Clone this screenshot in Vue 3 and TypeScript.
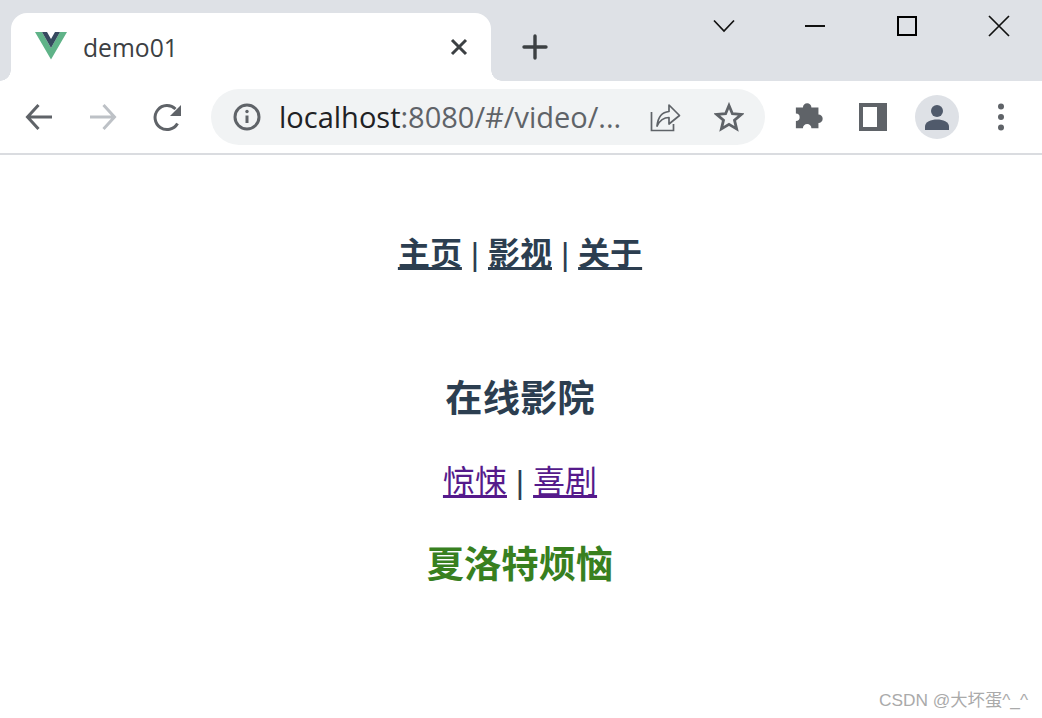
<template>
  <div class="window">
    <div class="tabstrip">
      <div class="tab">
        <svg class="favicon" width="32" height="28" viewBox="0 0 32 28">
          <polygon fill="#5fb388" points="0,0 7,0 16,16 25,0 32,0 16,27.5" />
          <polygon fill="#35495e" points="7,0 12,0 16,7 20,0 25,0 16,16" />
        </svg>
        <span class="tab__title">{{ title }}</span>
        <svg class="tab__close" width="20" height="20" viewBox="0 0 20 20">
          <path d="M3 3 17 17M17 3 3 17" stroke="#3c4043" stroke-width="3" fill="none" />
        </svg>
      </div>
      <svg class="newtab" width="26" height="26" viewBox="0 0 26 26">
        <path d="M13 2v22M2 13h22" stroke="#3c4043" stroke-width="3.4" stroke-linecap="round" fill="none" />
      </svg>
      <div class="winctrl">
        <span class="winctrl__btn winctrl__btn--menu">
          <svg width="22" height="14" viewBox="0 0 22 14"><path d="M1 1.500 11 12 21 1.500" stroke="#111" stroke-width="1.700" fill="none" /></svg>
        </span>
        <span class="winctrl__btn">
          <svg width="20" height="4" viewBox="0 0 20 4"><path d="M0 2h20" stroke="#111" stroke-width="2" fill="none" /></svg>
        </span>
        <span class="winctrl__btn">
          <svg width="20" height="20" viewBox="0 0 20 20"><rect x="1" y="1" width="18" height="18" stroke="#000" stroke-width="2" fill="none" /></svg>
        </span>
        <span class="winctrl__btn">
          <svg width="22" height="22" viewBox="0 0 22 22"><path d="M1 1 21 21M21 1 1 21" stroke="#111" stroke-width="1.700" fill="none" /></svg>
        </span>
      </div>
    </div>

    <div class="toolbar">
      <span class="tool">
        <svg width="32" height="32" viewBox="0 0 32 32"><path d="M29 16H5M15.500 4 4.500 16l11 12" stroke="#5f6368" stroke-width="3" fill="none" /></svg>
      </span>
      <span class="tool">
        <svg width="32" height="32" viewBox="0 0 32 32"><path d="M3 16h24M16.500 4l11 12-11 12" stroke="#bdc1c6" stroke-width="3" fill="none" /></svg>
      </span>
      <span class="tool">
        <svg width="32" height="32" viewBox="0 0 32 32">
          <path d="M26.500 22.500A12 12 0 1 1 24.500 8" stroke="#5f6368" stroke-width="3" fill="none" />
          <polygon fill="#5f6368" points="30,4 30,15 19,15" />
        </svg>
      </span>
      <div class="omnibox">
        <svg width="28" height="28" viewBox="0 0 28 28">
          <circle cx="14" cy="14" r="12" stroke="#5f6368" stroke-width="3" fill="none" />
          <path d="M14 12.500v7.500" stroke="#5f6368" stroke-width="3" />
          <circle cx="14" cy="8.500" r="1.700" fill="#5f6368" />
        </svg>
        <span class="url"><span class="url__host">localhost</span>:8080/#/video/...</span>
        <span class="omnibox__action">
          <svg width="32" height="30" viewBox="0 0 32 30">
            <path d="M2.500 10v18.500h22V22" stroke="#5f6368" stroke-width="1.700" fill="none" />
            <path d="M8 24C9 15 13.500 10 20 9.500V3l10.500 10.500L20 22v-6.500C14.500 15.500 11 18 8 24Z" stroke="#5f6368" stroke-width="1.700" fill="none" stroke-linejoin="round" />
          </svg>
        </span>
        <span class="omnibox__action">
          <svg width="30" height="30" viewBox="0 0 30 30">
            <path d="M15 3.500 18.400 11.700 27.300 12.400 20.500 18.200 22.600 26.900 15 22.300 7.400 26.900 9.500 18.200 2.700 12.400 11.600 11.700Z" stroke="#5f6368" stroke-width="2.800" fill="none" stroke-linejoin="miter" />
          </svg>
        </span>
      </div>
      <span class="tool">
        <svg width="32" height="32" viewBox="0 0 32 32">
          <path fill="#5f6368" d="M2 9h7.500a4.500 4.500 0 1 1 9 0H26v7.500a4.500 4.500 0 1 1 0 9V31h-7.500a4.500 4.500 0 1 0-9 0H2v-7.500a4 4 0 1 0 0-8Z" transform="translate(1 -2) scale(.94)" />
        </svg>
      </span>
      <span class="tool">
        <svg width="28" height="28" viewBox="0 0 28 28">
          <path fill="#5f6368" fill-rule="evenodd" d="M0 0h28v28H0ZM4 4v20h14V4Z" />
        </svg>
      </span>
      <span class="tool">
        <span class="avatar">
          <svg width="26" height="26" viewBox="0 0 26 26">
            <circle cx="13" cy="7" r="6" fill="#505a6b" />
            <path d="M1 26v-3.500C1 18 7 15.500 13 15.500S25 18 25 22.500V26Z" fill="#505a6b" />
          </svg>
        </span>
      </span>
      <span class="tool">
        <svg width="8" height="28" viewBox="0 0 8 28">
          <circle cx="4" cy="3.500" r="3" fill="#5f6368" />
          <circle cx="4" cy="14" r="3" fill="#5f6368" />
          <circle cx="4" cy="24.500" r="3" fill="#5f6368" />
        </svg>
      </span>
    </div>

    <div class="page">
      <nav class="nav">
        <template v-for="(link, i) in mainLinks" :key="link">
          <span v-if="i > 0"> | </span>
          <a href="#" class="nav__link" @click.prevent>{{ link }}</a>
        </template>
      </nav>
      <h3 class="heading">在线影院</h3>
      <div class="subnav">
        <template v-for="(link, i) in subLinks" :key="link">
          <span v-if="i > 0"> | </span>
          <a href="#" class="subnav__link" @click.prevent>{{ link }}</a>
        </template>
      </div>
      <h3 class="movie">夏洛特烦恼</h3>
    </div>

    <div class="watermark">CSDN @大坏蛋^_^</div>
  </div>
</template>

<script setup lang="ts">
const title = 'demo01';
const mainLinks: string[] = ['主页', '影视', '关于'];
const subLinks: string[] = ['惊悚', '喜剧'];
</script>

<style scoped>
.window {
  position: relative;
  width: 1042px;
  height: 718px;
  overflow: hidden;
  background: #fff;
  font-family: "Open Sans", "Noto Sans CJK SC", sans-serif;
}

.tabstrip {
  display: flex;
  align-items: flex-end;
  height: 81px;
  padding-left: 11px;
  background: #dee1e6;
}
.tab {
  position: relative;
  display: flex;
  align-items: center;
  width: 480px;
  height: 68px;
  padding: 0 22px 0 24px;
  box-sizing: border-box;
  background: #fff;
  border-radius: 16px 16px 0 0;
}
/* the two little flares where the tab meets the toolbar */
.tab::before,
.tab::after {
  content: "";
  position: absolute;
  bottom: 0;
  width: 11px;
  height: 11px;
}
.tab::before {
  left: -11px;
  background: radial-gradient(circle at 0 0, #dee1e6 10.5px, #fff 11px);
}
.tab::after {
  right: -11px;
  background: radial-gradient(circle at 100% 0, #dee1e6 10.5px, #fff 11px);
}
.favicon {
  flex-shrink: 0;
  margin-top: -2px;
}
.tab__title {
  flex: 1;
  margin-left: 16px;
  font-size: 24.7px;
  color: #3c4043;
}
.tab__close {
  flex-shrink: 0;
  margin-top: -1px;
}
.newtab {
  margin: 0 0 21px 31px;
}
.winctrl {
  display: flex;
  align-self: flex-start;
  margin-left: auto;
  margin-right: -3px;
}
.winctrl__btn {
  display: flex;
  align-items: center;
  justify-content: center;
  width: 92px;
  height: 52px;
}
.winctrl__btn--menu svg {
  margin-left: 2px;
}

.toolbar {
  display: flex;
  align-items: center;
  height: 72px;
  padding: 0 9px 0 7px;
  background: #fff;
  border-bottom: 2px solid #dadce0;
}
.tool {
  display: flex;
  align-items: center;
  justify-content: center;
  width: 64px;
  height: 64px;
  flex-shrink: 0;
}
.avatar {
  display: flex;
  align-items: flex-end;
  justify-content: center;
  width: 44px;
  height: 44px;
  padding-bottom: 9px;
  box-sizing: border-box;
  border-radius: 50%;
  background: #dee1e6;
}
.omnibox {
  display: flex;
  align-items: center;
  width: 554px;
  height: 56px;
  margin: 0 12px;
  padding-left: 22px;
  box-sizing: border-box;
  border-radius: 28px;
  background: #f1f3f4;
  flex-shrink: 0;
}
.url {
  flex: 1;
  margin-left: 18px;
  margin-top: -2px;
  font-size: 29px;
  color: #5f6368;
  white-space: nowrap;
}
.url__host {
  color: #202124;
}
.omnibox__action {
  display: flex;
  align-items: center;
  justify-content: center;
  width: 64px;
  height: 56px;
  flex-shrink: 0;
}
.omnibox__action:last-child {
  margin-right: 4px;
}

.page {
  display: flex;
  flex-direction: column;
  align-items: center;
  padding: 75px 2px 0 0;
  font-family: "Liberation Sans", "Noto Sans CJK SC", sans-serif;
  font-size: 32px;
  line-height: 48px;
  color: #2c3e50;
}
.nav__link {
  font-weight: 700;
  color: #2c3e50;
}
.heading {
  margin: 97px 0 0;
  font-size: 37.33px;
  line-height: 48px;
  font-weight: 700;
}
.subnav {
  margin-top: 35px;
}
.subnav__link {
  color: #551a8b;
}
.movie {
  margin: 35px 0 0;
  font-size: 37.33px;
  line-height: 48px;
  font-weight: 700;
  color: #38801f;
}

.watermark {
  position: absolute;
  right: 14px;
  bottom: 7px;
  font-family: "Liberation Sans", "Noto Sans CJK SC", sans-serif;
  font-size: 17.3px;
  color: #aaa;
}
</style>
